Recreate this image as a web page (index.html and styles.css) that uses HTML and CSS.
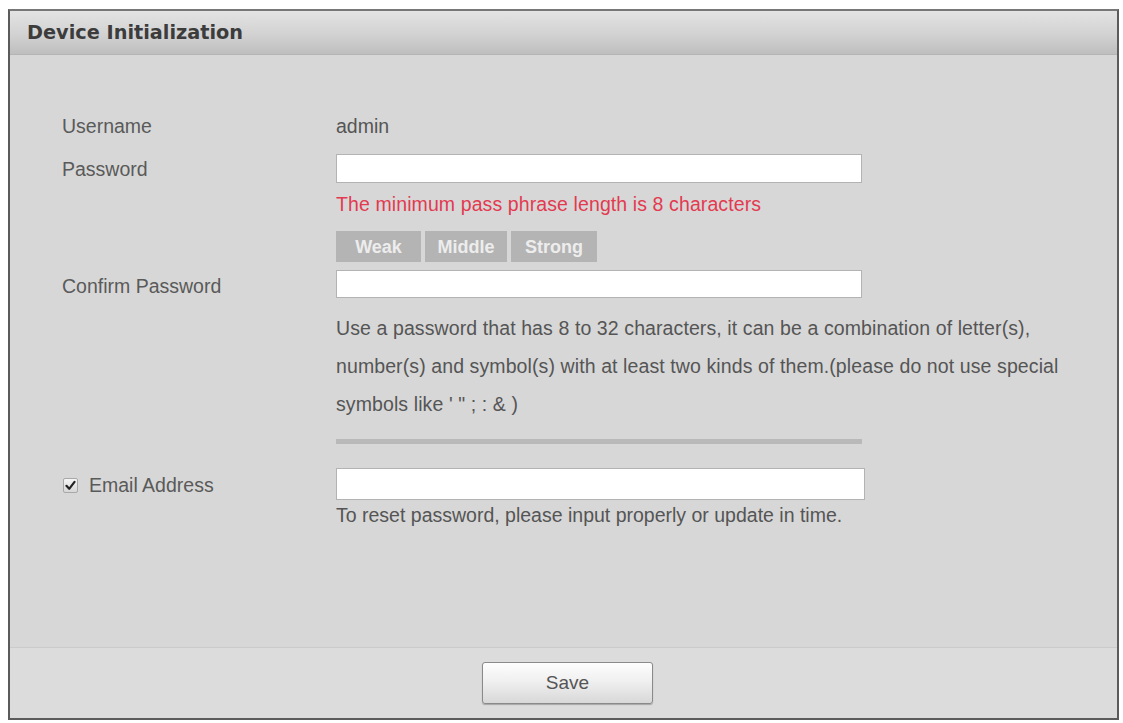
FILE: index.html
```html
<!DOCTYPE html>
<html lang="en">
<head>
<meta charset="utf-8">
<title>Device Initialization</title>
<link rel="stylesheet" href="styles.css">
</head>
<body>
<div class="panel">
  <div class="panel-head">Device Initialization</div>
  <div class="panel-body">
    <div class="row row-user">
      <div class="label">Username</div>
      <div class="field"><span class="value">admin</span></div>
    </div>
    <div class="row row-pass">
      <div class="label">Password</div>
      <div class="field"><input class="text-input" type="password"></div>
    </div>
    <div class="row row-warn">
      <div class="label"></div>
      <div class="field"><span class="warn">The minimum pass phrase length is 8 characters</span></div>
    </div>
    <div class="row row-strength">
      <div class="label"></div>
      <div class="field strength">
        <span class="level level-weak">Weak</span>
        <span class="level level-middle">Middle</span>
        <span class="level level-strong">Strong</span>
      </div>
    </div>
    <div class="row row-confirm">
      <div class="label">Confirm Password</div>
      <div class="field"><input class="text-input confirm-input" type="password"></div>
    </div>
    <div class="row row-hint">
      <div class="label"></div>
      <div class="field hint">Use a password that has 8 to 32 characters, it can be a combination of letter(s), number(s) and symbol(s) with at least two kinds of them.(please do not use special symbols like ' " ; : &amp; )</div>
    </div>
    <div class="row row-rule">
      <div class="label"></div>
      <div class="field"><div class="rule"></div></div>
    </div>
    <div class="row row-email">
      <label class="label check-label">
        <span class="checkbox"><svg viewBox="0 0 12 12" width="11" height="11"><path d="M1.6 6.4 L4.6 9.6 L10.4 2" fill="none" stroke="#222" stroke-width="2.4" stroke-linecap="round" stroke-linejoin="round"/></svg></span>Email Address
      </label>
      <div class="field"><input class="text-input email-input" type="text"></div>
    </div>
    <div class="row row-note">
      <div class="label"></div>
      <div class="field note">To reset password, please input properly or update in time.</div>
    </div>
  </div>
  <div class="panel-foot">
    <button class="btn-save" type="button">Save</button>
  </div>
</div>
</body>
</html>
```
FILE: styles.css
```css
html, body {
  margin: 0;
  padding: 0;
  background: #ffffff;
}

body {
  font-family: "Liberation Sans", Arial, sans-serif;
  font-size: 19.5px;
  color: #555555;
}

.panel {
  box-sizing: border-box;
  width: 1111px;
  height: 711px;
  margin: 9px 0 0 8px;
  border: 2px solid #5b5b5b;
  border-top-color: #777777;
  display: flex;
  flex-direction: column;
  background: #d7d7d7;
}

.panel-head {
  height: 43px;
  flex: none;
  display: flex;
  align-items: center;
  padding-left: 17px;
  font-family: "DejaVu Sans", Verdana, sans-serif;
  font-weight: bold;
  font-size: 19.3px;
  color: #3c3c3c;
  background: linear-gradient(#e3e3e3, #d2d2d2 55%, #bebebe);
  border-bottom: 1px solid #b4b4b4;
}

.panel-body {
  flex: 1;
  padding-top: 59px;
}

.row {
  display: flex;
  align-items: center;
}

.label {
  width: 274px;
  flex: none;
  padding-left: 52px;
  color: #5a5a5a;
  line-height: 24px;
}

.field {
  flex: 1;
  line-height: 24px;
}

.value {
  color: #555555;
}

.text-input {
  box-sizing: border-box;
  display: block;
  width: 526px;
  height: 29px;
  margin: 0;
  padding: 0 6px;
  border: 1px solid #b3b3b3;
  background: #ffffff;
  font: inherit;
  outline: none;
}

.row-pass { margin-top: 16px; }

.row-warn { margin-top: 9px; }

.warn {
  color: #e33a50;
  letter-spacing: 0.1px;
}

.row-strength { margin-top: 15px; }

.strength {
  display: flex;
  gap: 4px;
}

.level {
  height: 31px;
  display: flex;
  align-items: center;
  justify-content: center;
  background: #b4b4b4;
  color: #ededed;
  font-weight: bold;
  font-size: 18px;
}

.level-weak { width: 85px; }
.level-middle { width: 82px; }
.level-strong { width: 86px; }

.row-confirm { margin-top: 8px; }
.row-confirm .label { position: relative; top: 2px; }

.confirm-input { height: 28px; }

.row-hint {
  margin-top: 11px;
  align-items: flex-start;
}

.hint {
  line-height: 38px;
  padding-right: 50px;
  color: #555555;
  letter-spacing: 0.1px;
}

.row-rule { margin-top: 16px; }

.rule {
  width: 526px;
  height: 5px;
  background: #b9b9b9;
}

.row-email { margin-top: 24px; }

.email-input {
  width: 529px;
  height: 32px;
}

.check-label {
  display: flex;
  align-items: center;
  width: 273px;
  padding-left: 53px;
  position: relative;
  top: 1px;
}

.checkbox {
  box-sizing: border-box;
  width: 15px;
  height: 15px;
  margin-right: 11px;
  display: flex;
  align-items: center;
  justify-content: center;
  border: 1px solid #a8a8a8;
  border-radius: 2px;
  background: linear-gradient(#f6f6f6, #d6d6d6);
}

.row-note { margin-top: 4px; }

.note {
  line-height: 22px;
  color: #555555;
}

.panel-foot {
  flex: none;
  height: 70px;
  display: flex;
  align-items: center;
  justify-content: center;
  padding-left: 8px;
  border-top: 1px solid #cbcbcb;
  background: #dcdcdc;
}

.btn-save {
  width: 171px;
  height: 42px;
  border: 1px solid #8a8a8a;
  border-radius: 3px;
  background: linear-gradient(#fdfdfd, #f0f0f0 45%, #d8d8d8);
  box-shadow: 0 1px 1px rgba(0, 0, 0, 0.25);
  font-family: "Liberation Sans", Arial, sans-serif;
  font-size: 19px;
  color: #555555;
  cursor: pointer;
}
```
